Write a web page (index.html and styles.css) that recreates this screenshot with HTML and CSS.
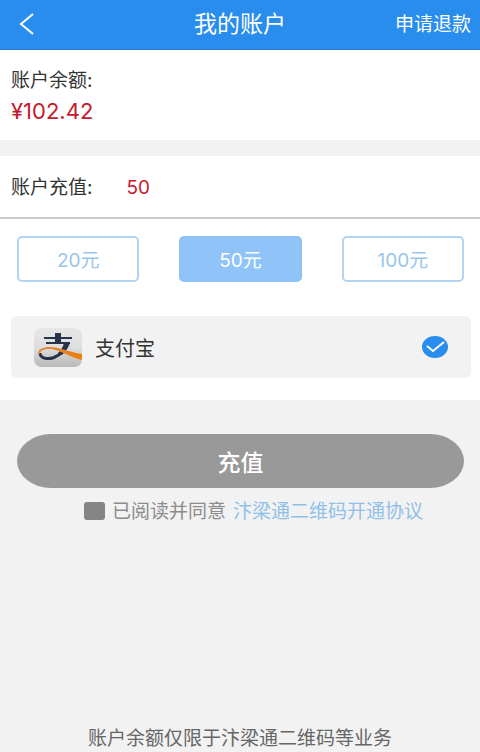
FILE: index.html
```html
<!DOCTYPE html>
<html lang="zh-CN">
<head>
<meta charset="utf-8">
<meta name="viewport" content="width=device-width, initial-scale=1">
<title>我的账户</title>
<link rel="stylesheet" href="styles.css">
</head>
<body>
<header class="topbar">
  <button class="back" type="button" aria-label="返回">
    <svg viewBox="0 0 16 24" width="16" height="24"><path d="M15 2 3 12 15 22"/></svg>
  </button>
  <h1 class="title">我的账户</h1>
  <a class="refund" href="#refund">申请退款</a>
</header>
<main class="main">
  <section class="balance">
    <p class="label">账户余额:</p>
    <p class="amount">¥102.42</p>
  </section>
  <section class="recharge">
    <div class="entry">
      <label class="label" for="sum">账户充值:</label>
      <input class="sum" id="sum" type="text" inputmode="numeric" value="50">
    </div>
    <div class="options">
      <button class="option" type="button">20元</button>
      <button class="option selected" type="button">50元</button>
      <button class="option" type="button">100元</button>
    </div>
    <label class="method" for="alipay">
      <svg class="logo" viewBox="0 0 48 39" width="48" height="39" aria-hidden="true">
        <defs>
          <linearGradient id="plate" x1="0" y1="0" x2="0" y2="1">
            <stop offset="0" stop-color="#e6e6e6"/>
            <stop offset="0.500" stop-color="#dedede"/>
            <stop offset="1" stop-color="#b9b9b9"/>
          </linearGradient>
          <linearGradient id="band" x1="0" y1="0" x2="1" y2="0">
            <stop offset="0" stop-color="#d9893c"/>
            <stop offset="1" stop-color="#ee7d0c"/>
          </linearGradient>
        </defs>
        <rect width="48" height="39" rx="8" ry="7" fill="url(#plate)"/>
        <path d="M10 9h28v2H10zM21 5h6v10h-6zM12 14h24v2H12z" fill="#26344a"/>
        <path d="M33 15C31 22 26 27 20 29.500 13 32 6 30 6 25" fill="none" stroke="#26344a" stroke-width="3"/>
        <path d="M30 15h6c-2 5-4 8-8 12l-4-2c3-3 5-6 6-10z" fill="#26344a"/>
        <path d="M4 26c0-5 5-7 12-7 9 0 19 5 32 7v6C36 29 26 22 17 21c-6-.5-11 1-11 5z" fill="url(#band)"/>
      </svg>
      <span class="method-name">支付宝</span>
      <input class="radio" id="alipay" type="radio" name="method" checked>
      <svg class="tick" viewBox="0 0 26 22" width="26" height="22" aria-hidden="true">
        <ellipse cx="13" cy="11" rx="13" ry="11"/>
        <path d="M5 10l6 5L22 6"/>
      </svg>
    </label>
  </section>
  <button class="submit" type="button">充值</button>
  <div class="agreement">
    <input class="agree" id="agree" type="checkbox">
    <label class="agree-text" for="agree">已阅读并同意</label>
    <a class="terms" href="#terms">汴梁通二维码开通协议</a>
  </div>
</main>
<footer class="note">账户余额仅限于汴梁通二维码等业务</footer>
</body>
</html>
```
FILE: styles.css
```css
* {
  box-sizing: border-box;
}

body {
  display: flex;
  flex-direction: column;
  min-height: 100vh;
  margin: 0;
  background: #f2f2f2;
  color: #333;
  font: 19px/24px Inter, "Noto Sans CJK SC", sans-serif;
}

button,
input {
  margin: 0;
  padding: 0;
  border: 0;
  background: none;
  color: inherit;
  font: inherit;
}

a {
  text-decoration: none;
}

h1,
p {
  margin: 0;
}

.topbar {
  display: grid;
  grid-template-columns: 1fr auto 1fr;
  align-items: center;
  height: 50px;
  padding: 0 9px 2px;
  border-bottom: 1px solid #267fd4;
  background: #288dec;
  color: #fff;
}

.back {
  display: flex;
  justify-self: start;
  padding-left: 9px;
}

.back svg {
  fill: none;
  stroke: #fff;
  stroke-width: 2;
}

.title {
  font-size: 23px;
  font-weight: 400;
}

.refund {
  justify-self: end;
  padding-top: 2px;
  color: #fff;
}

.balance {
  margin-bottom: 16px;
  padding: 18px 11px 16px;
  background: #fff;
}

.label {
  font-size: 19px;
  line-height: 26px;
}

.amount {
  padding-top: 4px;
  color: #c8192c;
  font-size: 22px;
  line-height: 26px;
}

.recharge {
  padding-bottom: 22px;
  background: #fff;
}

.entry {
  display: flex;
  align-items: center;
  gap: 34px;
  height: 63px;
  padding: 3px 11px 0;
  border-bottom: 2px solid #ccc;
}

.sum {
  flex: 1;
  min-width: 0;
  color: #c8192c;
  font-size: 19px;
}

.options {
  display: flex;
  justify-content: space-between;
  gap: 40px;
  padding: 17px 16px 34px 17px;
}

.option {
  flex: 1;
  height: 46px;
  padding-top: 3px;
  border: 2px solid #b3d4f0;
  border-radius: 5px;
  color: #99c5ea;
}

.selected {
  border-color: #8fc2f4;
  background: #90c4f8;
  color: #fff;
}

.method {
  display: flex;
  align-items: center;
  gap: 13px;
  height: 62px;
  margin: 0 9px 0 11px;
  padding: 0 23px;
  border-radius: 6px;
  background: #f2f2f2;
}

.method-name {
  flex: 1;
  padding-top: 3px;
  font-size: 20px;
}

.radio {
  width: 0;
  height: 0;
  appearance: none;
}

.tick {
  fill: #288dec;
}

.tick path {
  fill: none;
  stroke: #fff;
  stroke-width: 2;
}

.radio:not(:checked) + .tick {
  opacity: 0;
}

.main {
  display: flex;
  flex-direction: column;
}

.submit {
  height: 54px;
  margin: 34px 16px 9px 17px;
  padding-top: 3px;
  border-radius: 34px / 27px;
  background: #999;
  color: #fff;
  font-size: 23px;
  font-weight: 500;
}

.agreement {
  display: flex;
  justify-content: center;
  align-items: center;
  gap: 7px;
  padding: 0 0 0 27px;
  color: #8c8c8c;
}

.agree {
  width: 21px;
  height: 18px;
  border-radius: 3px;
  background: #858585;
  appearance: none;
}

.agree:checked {
  background: #288dec;
}

.agree-text,
.terms {
  padding-top: 3px;
}

.terms {
  color: #90c0e8;
}

.note {
  margin-top: auto;
  padding-bottom: 1px;
  color: #666;
  text-align: center;
}
```
